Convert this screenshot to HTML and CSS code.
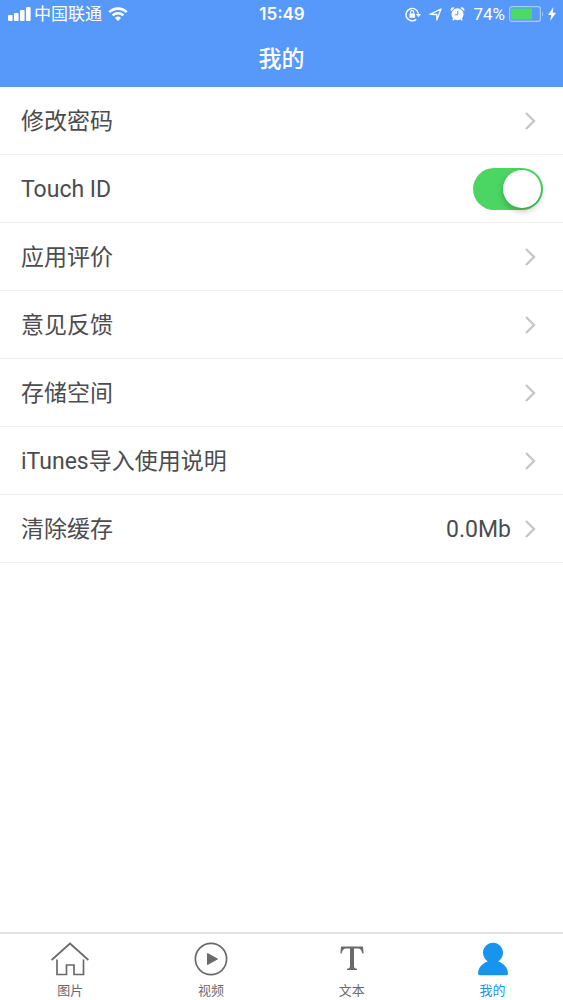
FILE: index.html
```html
<!DOCTYPE html>
<html lang="zh-CN">
<head>
<meta charset="utf-8">
<meta name="viewport" content="width=device-width, initial-scale=1">
<title>我的</title>
<link rel="stylesheet" href="styles.css">
</head>
<body>
<div class="app">
  <header class="header">
    <div class="status">
      <div class="status-left">
        <svg width="23" height="14" viewBox="0 0 23 14" fill="currentColor" aria-hidden="true">
          <rect x="0" y="8" width="4.600" height="6" rx="1"/><rect x="6" y="6" width="4.600" height="8" rx="1"/><rect x="12" y="3" width="4.600" height="11" rx="1"/><rect x="18" y="0" width="4.600" height="14" rx="1"/>
        </svg>
        <span class="carrier">中国联通</span>
        <svg class="wifi" width="20" height="14" viewBox="0 0 20 14" fill="none" stroke="currentColor" stroke-width="2.6" aria-hidden="true">
          <path d="M1.3 5.1a12.6 12.6 0 0 1 17.4 0M4.6 8.4a7.9 7.9 0 0 1 10.8 0"/><path d="M10 14l-3-3.1a4.6 4.6 0 0 1 6 0z" fill="currentColor" stroke="none"/>
        </svg>
      </div>
      <span class="time">15:49</span>
      <div class="status-right">
        <svg width="16" height="15" viewBox="0 0 16 15" fill="none" stroke="currentColor" stroke-width="1.4" aria-hidden="true">
          <path d="M11.2 12.4A6.2 6.2 0 1 1 13.4 7"/><path d="M11 7h5l-2.5 3.2z" fill="currentColor" stroke="none"/><rect x="4.4" y="6.4" width="5.6" height="4.4" rx=".6" fill="currentColor" stroke="none"/><path d="M5.6 6.8V5.2a1.6 1.6 0 0 1 3.2 0v1.6" stroke-width="1.1"/>
        </svg>
        <svg width="13" height="13" viewBox="0 0 13 13" fill="none" stroke="currentColor" stroke-width="1.3" stroke-linejoin="round" aria-hidden="true">
          <path d="M12 1L7.8 12V6.5L1 6.300z"/>
        </svg>
        <svg width="15" height="14" viewBox="0 0 15 14" aria-hidden="true">
          <g fill="currentColor"><circle cx="7.5" cy="7.3" r="6"/><path d="M1 4.2A2.5 2.5 0 0 1 4.5.8zM14 4.2A2.5 2.5 0 0 0 10.5.8zM3.2 11l1.5 1.2-1.5 1.5-.9-.7zM11.8 11l-1.5 1.2 1.5 1.5.9-.7z"/></g>
          <path class="hands" d="M7.8 4v3.8H4.8"/>
        </svg>
        <span class="percent">74%</span>
        <div class="power">
          <svg width="35" height="16" viewBox="0 0 35 16" aria-hidden="true">
            <rect x=".6" y=".6" width="30.8" height="14.8" rx="2.5" fill="none" stroke="#a6ccff" stroke-width="1.2"/><rect x="2" y="2.500" width="21" height="11" rx="1" fill="#4cd964"/><path d="M33 5.5q2 2.500 0 5z" fill="#a6ccff"/>
          </svg>
          <svg width="8" height="14" viewBox="0 0 8 14" fill="currentColor" aria-hidden="true"><path d="M5.5 0L0 8h3.2L2.2 14 8 5.800H4.7z"/></svg>
        </div>
      </div>
    </div>
    <h1 class="title">我的</h1>
  </header>

  <main class="list">
    <button class="row" type="button"><span class="label">修改密码</span><svg class="chevron" viewBox="0 0 12 20" aria-hidden="true"><path d="M2 2l8 8-8 8"/></svg></button>
    <label class="row" for="touch-id"><span class="label">Touch ID</span><input class="switch" id="touch-id" type="checkbox" role="switch" checked></label>
    <button class="row" type="button"><span class="label">应用评价</span><svg class="chevron" viewBox="0 0 12 20" aria-hidden="true"><path d="M2 2l8 8-8 8"/></svg></button>
    <button class="row" type="button"><span class="label">意见反馈</span><svg class="chevron" viewBox="0 0 12 20" aria-hidden="true"><path d="M2 2l8 8-8 8"/></svg></button>
    <button class="row" type="button"><span class="label">存储空间</span><svg class="chevron" viewBox="0 0 12 20" aria-hidden="true"><path d="M2 2l8 8-8 8"/></svg></button>
    <button class="row" type="button"><span class="label">iTunes导入使用说明</span><svg class="chevron" viewBox="0 0 12 20" aria-hidden="true"><path d="M2 2l8 8-8 8"/></svg></button>
    <button class="row" type="button"><span class="label">清除缓存</span><span class="value">0.0Mb</span><svg class="chevron" viewBox="0 0 12 20" aria-hidden="true"><path d="M2 2l8 8-8 8"/></svg></button>
  </main>

  <nav class="tabs">
    <a class="tab" href="#images">
      <svg width="38" height="34" viewBox="0 0 38 34" fill="none" stroke="currentColor" stroke-width="1.7" aria-hidden="true"><path d="M.6 18L19 1.500 37.400 18M6 17.500V32.500h9.500V23h7.500V32.500h9.500V17.500"/></svg>
      <span>图片</span>
    </a>
    <a class="tab" href="#videos">
      <svg width="34" height="34" viewBox="0 0 34 34" aria-hidden="true"><circle cx="17" cy="17" r="15.6" fill="none" stroke="currentColor" stroke-width="1.7"/><path d="M13.5 11.500L23.500 17l-10 5.500z" fill="currentColor" stroke="currentColor" stroke-linejoin="round"/></svg>
      <span>视频</span>
    </a>
    <a class="tab" href="#texts">
      <svg width="24" height="34" viewBox="0 0 24 34" fill="currentColor" aria-hidden="true"><path d="M1 4.500h22l.6 7h-1.300C21.600 8 20.500 6.500 17.500 6.500H14V24c0 2 .8 2.500 3 2.700V28H7v-1.300c2.200-.2 3-.7 3-2.700V6.500H6.500C3.500 6.500 2.400 8 1.700 11.500H.4z"/></svg>
      <span>文本</span>
    </a>
    <a class="tab tab-active" href="#me" aria-current="page">
      <svg width="30" height="34" viewBox="0 0 30 34" fill="currentColor" aria-hidden="true"><path d="M15 .8c5.600 0 10 4.400 10 10 0 3.700-2 6.800-4.800 8.600C26 21.200 30 26 30 31.500q0 1.800-1.800 1.800H1.800Q0 33.300 0 31.500C0 26 4 21.200 9.800 19.400 7 17.600 5 14.500 5 10.800c0-5.600 4.400-10 10-10z"/></svg>
      <span>我的</span>
    </a>
  </nav>
</div>
</body>
</html>
```
FILE: styles.css
```css
* {
  box-sizing: border-box;
}

body {
  margin: 0;
  background: #fff;
  color: #4c4c4f;
  font-family: Roboto, "Noto Sans CJK SC", sans-serif;
}

.app {
  display: flex;
  flex-direction: column;
  min-height: 100vh;
}

.header {
  padding-bottom: 10px;
  background: #5798fb;
  color: #fff;
}

.status {
  display: grid;
  grid-template-columns: 1fr auto 1fr;
  align-items: center;
  height: 28px;
  padding: 0 7px 0 8px;
}

.status-left,
.status-right,
.power {
  display: flex;
  align-items: center;
}

.status-left {
  gap: 3px;
}

.status-right {
  justify-content: flex-end;
  gap: 8px;
}

.power {
  gap: 4px;
  margin-left: -4px;
}

.carrier {
  font-size: 17px;
  line-height: 24px;
}

.wifi {
  margin-left: 3px;
}

.time {
  font-family: Inter, sans-serif;
  font-size: 17px;
  font-weight: 600;
  line-height: 24px;
}

.percent {
  font-size: 17px;
  line-height: 24px;
}

.hands {
  fill: none;
  stroke: #5798fb;
  stroke-width: 1;
}

.title {
  margin: 0;
  padding-top: 14px;
  font-size: 23px;
  font-weight: 500;
  line-height: 35px;
  text-align: center;
}

.list {
  flex: 1;
}

.row {
  display: flex;
  align-items: center;
  width: 100%;
  height: 68px;
  padding: 0 27px 0 21px;
  border: 0;
  border-bottom: 1px solid #f0f0f2;
  background: none;
  color: inherit;
  font: inherit;
  font-size: 23px;
  line-height: 34px;
  text-align: left;
}

.label {
  flex: 1;
}

.label,
.value {
  padding-top: 3px;
}

.chevron {
  width: 12px;
  height: 20px;
  fill: none;
  stroke: #c7c7cb;
  stroke-width: 2.4;
}

.value {
  margin-right: 13px;
}

.switch {
  appearance: none;
  display: flex;
  align-items: center;
  width: 70px;
  height: 42px;
  margin: 0 -7px 0 0;
  padding: 2px;
  border-radius: 21px;
  background: #d8d8dc;
}

.switch::before {
  content: "";
  width: 38px;
  height: 38px;
  border-radius: 50%;
  background: #fff;
  box-shadow: 0 3px 6px rgba(0, 0, 0, 0.25);
}

.switch:checked {
  justify-content: flex-end;
  background: #4bd663;
}

.tabs {
  display: grid;
  grid-template-columns: repeat(4, 1fr);
  padding-top: 8px;
  border-top: 2px solid #e2e2e3;
}

.tab {
  display: flex;
  flex-direction: column;
  align-items: center;
  gap: 5px;
  color: #6a6a6d;
  font-size: 13px;
  line-height: 19px;
  text-decoration: none;
}

.tab-active {
  color: #1795ee;
}
```
